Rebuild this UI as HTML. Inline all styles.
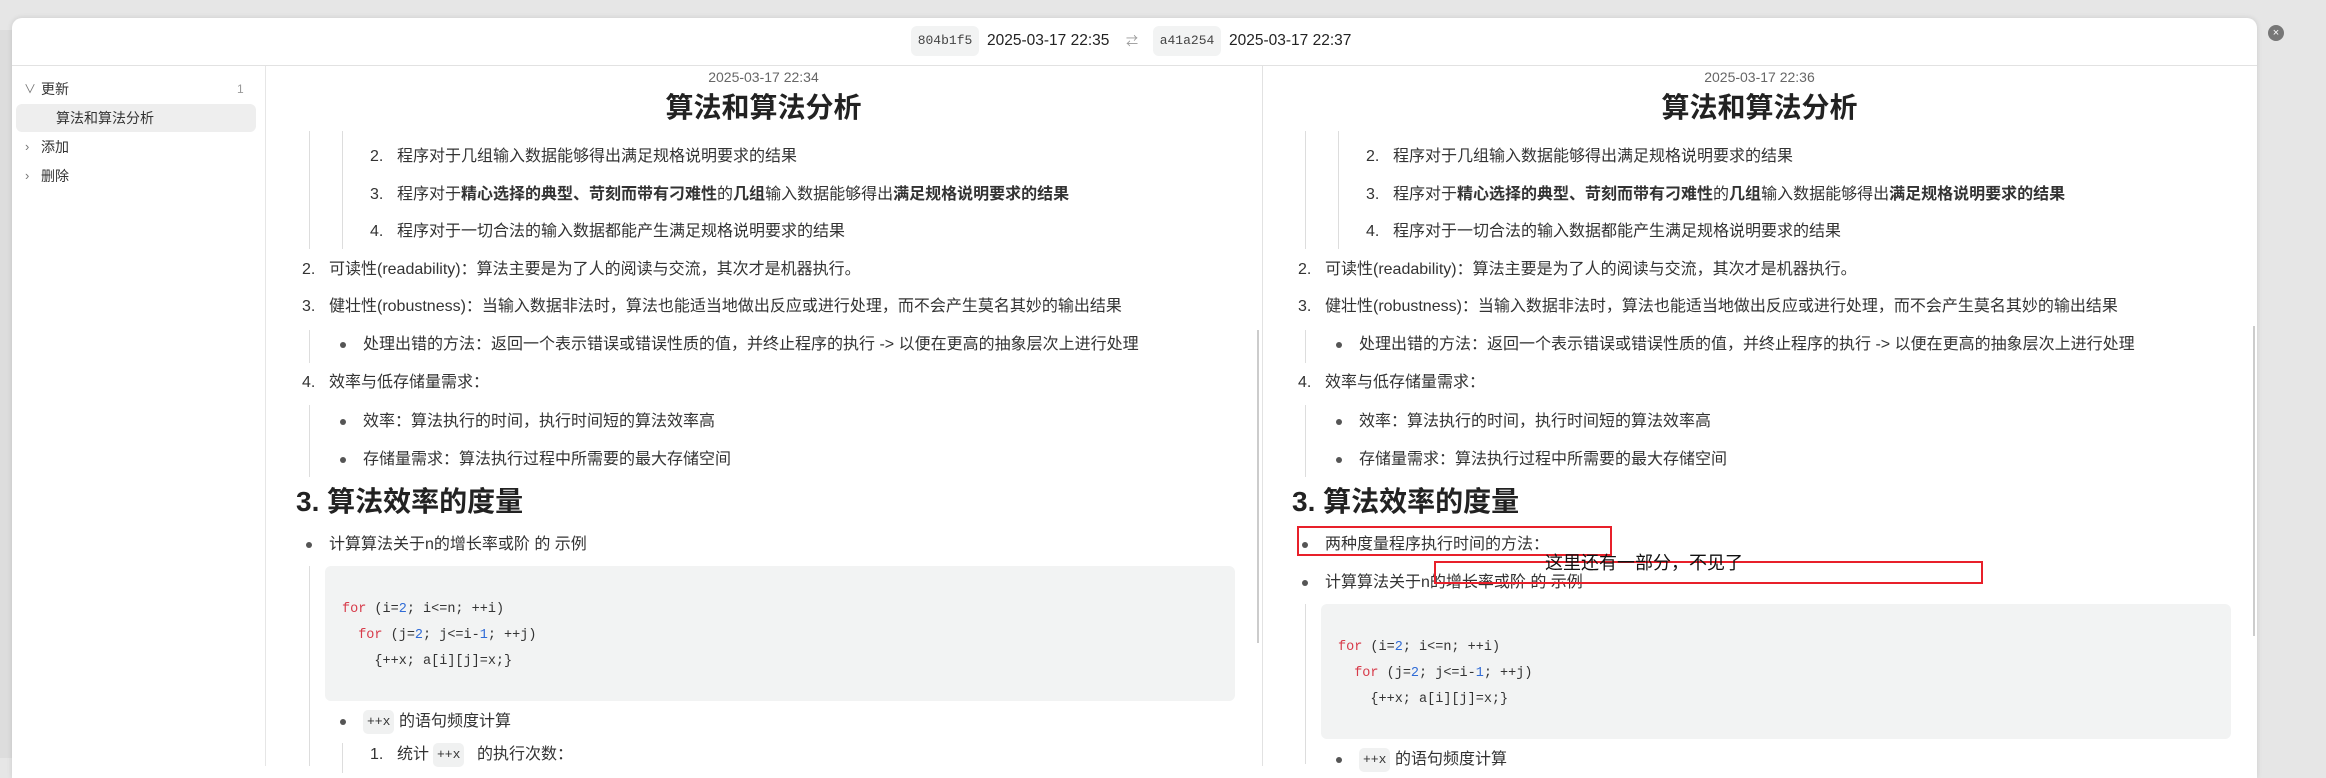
<!DOCTYPE html>
<html><head><meta charset="utf-8"><style>
*{margin:0;padding:0;box-sizing:border-box}
body{width:2326px;height:758px;overflow:hidden;background:#e6e6e6;font-family:"Liberation Sans","Noto Sans CJK SC",sans-serif;color:#333;position:relative}
.a{position:absolute;white-space:nowrap;line-height:20px}
.t{font-size:16px}
.modal{position:absolute;left:12px;top:18px;width:2245px;height:760px;background:#fff;border-radius:10px 10px 0 0;box-shadow:0 0 6px rgba(0,0,0,.12)}
.tag{position:absolute;background:#f2f3f3;border-radius:6px;font-family:"Liberation Mono",monospace;font-size:13px;color:#444;text-align:center;line-height:30px;height:30px}
.vl{position:absolute;width:1px;background:#ddd}
.dot{position:absolute;width:6px;height:6px;border-radius:50%;background:#555}
.code{position:absolute;background:#f2f3f3;border-radius:6px}
.m{font-family:"Liberation Mono","DejaVu Sans Mono",monospace;font-size:13.5px;color:#333}
.k{color:#d73a49}.n{color:#2f6bd6}
.red{position:absolute;border:2px solid #e8202a}
.chip{position:absolute;background:#f0f1f1;border-radius:5px;font-family:"Liberation Mono",monospace;font-size:13px;line-height:24px;padding:0 4px}
</style></head><body>
<div class="a" style="left:0;top:30px;width:12px;height:728px;background:#ddd"></div>
<div class="modal"></div>
<!-- header -->
<div class="tag" style="left:911px;top:26px;width:68px">804b1f5</div>
<div class="a" style="left:987px;top:31px;font-size:15.5px;color:#222">2025-03-17 22:35</div>
<div class="a" style="left:1126px;top:31px;font-size:12px;color:#999">⇄</div>
<div class="tag" style="left:1153px;top:26px;width:68px">a41a254</div>
<div class="a" style="left:1229px;top:31px;font-size:15.5px;color:#222">2025-03-17 22:37</div>
<div style="position:absolute;left:2268px;top:25px;width:16px;height:16px;border-radius:50%;background:#777;color:#fff;font-size:11px;text-align:center;line-height:16px">×</div>
<div style="position:absolute;left:12px;top:65px;width:2245px;height:1px;background:#e2e2e2"></div>
<!-- sidebar -->
<div style="position:absolute;left:265px;top:66px;width:1px;height:700px;background:#e6e6e6"></div>
<div class="a" style="left:24px;top:79px;font-size:12px;color:#777">∨</div>
<div class="a" style="left:41px;top:79px;font-size:14px">更新</div>
<div class="a" style="left:237px;top:79px;font-size:12px;color:#999">1</div>
<div style="position:absolute;left:16px;top:104px;width:240px;height:28px;background:#eee;border-radius:6px"></div>
<div class="a" style="left:56px;top:108px;font-size:14px">算法和算法分析</div>
<div class="a" style="left:25px;top:137px;font-size:13px;color:#777">›</div>
<div class="a" style="left:41px;top:137px;font-size:14px">添加</div>
<div class="a" style="left:25px;top:166px;font-size:13px;color:#777">›</div>
<div class="a" style="left:41px;top:166px;font-size:14px">删除</div>
<!-- pane divider -->
<div style="position:absolute;left:1262px;top:66px;width:1px;height:700px;background:#e2e2e2"></div>
<div style="position:absolute;left:1257px;top:330px;width:2px;height:313px;background:#ccc"></div>
<div style="position:absolute;left:2253px;top:326px;width:2px;height:310px;background:#ccc"></div>

<!-- LEFT PANE -->
<div class="a" style="left:265px;width:997px;text-align:center;top:67px;font-size:14px;color:#666">2025-03-17 22:34</div>
<div class="a" style="left:265px;width:997px;text-align:center;top:92px;line-height:32px;font-size:28px;font-weight:bold;color:#222">算法和算法分析</div>
<div class="vl" style="left:309px;top:131px;height:118px"></div>
<div class="vl" style="left:342px;top:131px;height:118px"></div>
<div class="a t" style="left:370px;top:147px">2.</div><div class="a t" style="left:397px;top:147px">程序对于几组输入数据能够得出满足规格说明要求的结果</div>
<div class="a t" style="left:370px;top:185px">3.</div><div class="a t" style="left:397px;top:185px">程序对于<b>精心选择的典型、苛刻而带有刁难性</b>的<b>几组</b>输入数据能够得出<b>满足规格说明要求的结果</b></div>
<div class="a t" style="left:370px;top:222px">4.</div><div class="a t" style="left:397px;top:222px">程序对于一切合法的输入数据都能产生满足规格说明要求的结果</div>
<div class="a t" style="left:302px;top:260px">2.</div><div class="a t" style="left:329px;top:260px">可读性(readability)：算法主要是为了人的阅读与交流，其次才是机器执行。</div>
<div class="a t" style="left:302px;top:297px">3.</div><div class="a t" style="left:329px;top:297px">健壮性(robustness)：当输入数据非法时，算法也能适当地做出反应或进行处理，而不会产生莫名其妙的输出结果</div>
<div class="vl" style="left:309px;top:330px;height:33px"></div>
<div class="dot" style="left:340px;top:342px"></div><div class="a t" style="left:363px;top:335px">处理出错的方法：返回一个表示错误或错误性质的值，并终止程序的执行 -&gt; 以便在更高的抽象层次上进行处理</div>
<div class="a t" style="left:302px;top:373px">4.</div><div class="a t" style="left:329px;top:373px">效率与低存储量需求：</div>
<div class="vl" style="left:309px;top:405px;height:72px"></div>
<div class="dot" style="left:340px;top:419px"></div><div class="a t" style="left:363px;top:412px">效率：算法执行的时间，执行时间短的算法效率高</div>
<div class="dot" style="left:340px;top:457px"></div><div class="a t" style="left:363px;top:450px">存储量需求：算法执行过程中所需要的最大存储空间</div>
<div class="a" style="left:296px;top:486px;line-height:32px;font-size:28px;font-weight:bold;color:#222">3. 算法效率的度量</div>
<div class="dot" style="left:306px;top:542px"></div><div class="a t" style="left:329px;top:535px">计算算法关于n的增长率或阶 的 示例</div>
<div class="vl" style="left:309px;top:566px;height:200px"></div>
<div class="code" style="left:325px;top:566px;width:910px;height:135px"></div>
<div class="a m" style="left:342px;top:600px"><span class="k">for</span> (i=<span class="n">2</span>; i&lt;=n; ++i)</div>
<div class="a m" style="left:342px;top:626px"><span class="k">&nbsp;&nbsp;for</span> (j=<span class="n">2</span>; j&lt;=i-<span class="n">1</span>; ++j)</div>
<div class="a m" style="left:342px;top:652px">&nbsp;&nbsp;&nbsp;&nbsp;{++x; a[i][j]=x;}</div>
<div class="dot" style="left:340px;top:719px"></div>
<div class="chip" style="left:363px;top:710px">++x</div><div class="a t" style="left:399px;top:712px">的语句频度计算</div>
<div class="vl" style="left:342px;top:743px;height:30px"></div>
<div class="a t" style="left:370px;top:745px">1.</div><div class="a t" style="left:397px;top:745px">统计</div><div class="chip" style="left:433px;top:743px">++x</div><div class="a t" style="left:477px;top:745px">的执行次数：</div>

<!-- RIGHT PANE -->
<div class="a" style="left:1262px;width:995px;text-align:center;top:67px;font-size:14px;color:#666">2025-03-17 22:36</div>
<div class="a" style="left:1262px;width:995px;text-align:center;top:92px;line-height:32px;font-size:28px;font-weight:bold;color:#222">算法和算法分析</div>
<div class="vl" style="left:1305px;top:131px;height:118px"></div>
<div class="vl" style="left:1338px;top:131px;height:118px"></div>
<div class="a t" style="left:1366px;top:147px">2.</div><div class="a t" style="left:1393px;top:147px">程序对于几组输入数据能够得出满足规格说明要求的结果</div>
<div class="a t" style="left:1366px;top:185px">3.</div><div class="a t" style="left:1393px;top:185px">程序对于<b>精心选择的典型、苛刻而带有刁难性</b>的<b>几组</b>输入数据能够得出<b>满足规格说明要求的结果</b></div>
<div class="a t" style="left:1366px;top:222px">4.</div><div class="a t" style="left:1393px;top:222px">程序对于一切合法的输入数据都能产生满足规格说明要求的结果</div>
<div class="a t" style="left:1298px;top:260px">2.</div><div class="a t" style="left:1325px;top:260px">可读性(readability)：算法主要是为了人的阅读与交流，其次才是机器执行。</div>
<div class="a t" style="left:1298px;top:297px">3.</div><div class="a t" style="left:1325px;top:297px">健壮性(robustness)：当输入数据非法时，算法也能适当地做出反应或进行处理，而不会产生莫名其妙的输出结果</div>
<div class="vl" style="left:1305px;top:330px;height:33px"></div>
<div class="dot" style="left:1336px;top:342px"></div><div class="a t" style="left:1359px;top:335px">处理出错的方法：返回一个表示错误或错误性质的值，并终止程序的执行 -&gt; 以便在更高的抽象层次上进行处理</div>
<div class="a t" style="left:1298px;top:373px">4.</div><div class="a t" style="left:1325px;top:373px">效率与低存储量需求：</div>
<div class="vl" style="left:1305px;top:405px;height:72px"></div>
<div class="dot" style="left:1336px;top:419px"></div><div class="a t" style="left:1359px;top:412px">效率：算法执行的时间，执行时间短的算法效率高</div>
<div class="dot" style="left:1336px;top:457px"></div><div class="a t" style="left:1359px;top:450px">存储量需求：算法执行过程中所需要的最大存储空间</div>
<div class="a" style="left:1292px;top:486px;line-height:32px;font-size:28px;font-weight:bold;color:#222">3. 算法效率的度量</div>
<div class="dot" style="left:1302px;top:542px"></div><div class="a t" style="left:1325px;top:535px">两种度量程序执行时间的方法：</div>
<div class="dot" style="left:1302px;top:580px"></div><div class="a t" style="left:1325px;top:573px">计算算法关于n的增长率或阶 的 示例</div>
<div class="vl" style="left:1305px;top:604px;height:160px"></div>
<div class="code" style="left:1321px;top:604px;width:910px;height:135px"></div>
<div class="a m" style="left:1338px;top:638px"><span class="k">for</span> (i=<span class="n">2</span>; i&lt;=n; ++i)</div>
<div class="a m" style="left:1338px;top:664px"><span class="k">&nbsp;&nbsp;for</span> (j=<span class="n">2</span>; j&lt;=i-<span class="n">1</span>; ++j)</div>
<div class="a m" style="left:1338px;top:690px">&nbsp;&nbsp;&nbsp;&nbsp;{++x; a[i][j]=x;}</div>
<div class="dot" style="left:1336px;top:757px"></div>
<div class="chip" style="left:1359px;top:748px">++x</div><div class="a t" style="left:1395px;top:750px">的语句频度计算</div>
<!-- annotations -->
<div class="red" style="left:1297px;top:526px;width:315px;height:30px"></div>
<div class="red" style="left:1434px;top:561px;width:549px;height:23px"></div>
<div class="a" style="left:1545px;top:553px;font-size:18px;color:#111">这里还有一部分，不见了</div>
</body></html>
